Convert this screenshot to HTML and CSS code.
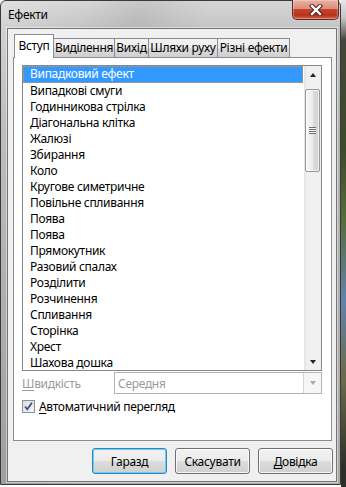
FILE: index.html
```html
<!DOCTYPE html>
<html lang="uk">
  <head>
    <meta charset="UTF-8" />
    <title>Ефекти</title>
    <link rel="stylesheet" href="styles.css">
  </head>
  <body>
    <div class="desk">
      <div class="window">
        <div class="titlebar">
          <span class="title">Ефекти</span>
          <button class="close-btn" title="Закрити">
            <svg width="14" height="12" viewBox="0 0 14 12">
              <path d="M3 2 L11 10 M11 2 L3 10" stroke="#4a2018" stroke-width="4.4" stroke-linecap="square" fill="none"/>
              <path d="M3 2 L11 10 M11 2 L3 10" stroke="#ffffff" stroke-width="2.4" stroke-linecap="square" fill="none"/>
            </svg>
          </button>
        </div>

        <div class="client">
          <div class="tabs">
            <div class="tab active w-intro">Вступ</div>
            <div class="tab w-select">Виділення</div>
            <div class="tab w-exit">Вихід</div>
            <div class="tab w-path">Шляхи руху</div>
            <div class="tab w-misc">Різні ефекти</div>
          </div>

          <div class="tab-page">
            <div class="listbox">
              <ul class="effects">
                <li class="selected">Випадковий ефект</li>
                <li>Випадкові смуги</li>
                <li>Годинникова стрілка</li>
                <li>Діагональна клітка</li>
                <li>Жалюзі</li>
                <li>Збирання</li>
                <li>Коло</li>
                <li>Кругове симетричне</li>
                <li>Повільне спливання</li>
                <li>Поява</li>
                <li>Поява</li>
                <li>Прямокутник</li>
                <li>Разовий спалах</li>
                <li>Розділити</li>
                <li>Розчинення</li>
                <li>Спливання</li>
                <li>Сторінка</li>
                <li>Хрест</li>
                <li>Шахова дошка</li>
              </ul>
              <div class="vscroll">
                <div class="sb-arrow"><span class="tri up"></span></div>
                <div class="sb-track">
                  <div class="sb-thumb"><span class="grip"></span></div>
                </div>
                <div class="sb-arrow"><span class="tri down"></span></div>
              </div>
            </div>

            <div class="speed-row">
              <span class="speed-label"><u>Ш</u>видкість</span>
              <div class="combo">
                <span class="combo-text">Середня</span>
                <span class="combo-btn"><span class="tri down gray"></span></span>
              </div>
            </div>

            <label class="check-row">
              <span class="checkbox">
                <svg width="11" height="11" viewBox="0 0 11 11">
                  <path d="M2 5.5 L4.3 8.3 L9 1.8" stroke="#3a4f86" stroke-width="1.8" fill="none"/>
                </svg>
              </span>
              <span><u>А</u>втоматичний перегляд</span>
            </label>
          </div>

          <div class="buttons">
            <button class="btn default">Гаразд</button>
            <button class="btn">Скасувати</button>
            <button class="btn"><u>Д</u>овідка</button>
          </div>
        </div>
      </div>
      <div class="desk-strip"></div>
    </div>
  </body>
</html>
```

FILE: styles.css
```css
body {
  margin: 0;
  font-family: 'Noto Sans', 'Open Sans', sans-serif;
  font-size: 12px;
  letter-spacing: -0.3px;
  color: #000;
  background-color: #fff;
}
.desk {
  display: flex;
  height: 487px;
  overflow: hidden;
}
.window {
  width: 341px;
  height: 485px;
  box-sizing: border-box;
  border: 1px solid #3a3a3a;
  border-radius: 6px 6px 0 0;
  padding: 0 3px 2px 6px;
  display: flex;
  flex-direction: column;
  position: relative;
  background:
    linear-gradient(105deg, rgba(255,255,255,0.25) 0, rgba(255,255,255,0) 18%, rgba(0,0,0,0.07) 30%, rgba(255,255,255,0) 45%),
    linear-gradient(to bottom, #d6d6d6 0, #c4c4c4 28px, #b3b3b3 120px, #a9a9a9 100%);
}
.desk-strip {
  flex: 1;
  background: linear-gradient(to bottom, #e8e8e8 0, #c4c4c4 18px, #46453a 40px, #3d4b2a 150px, #586c3c 220px, #6283ad 300px, #6b6a48 380px, #2d2d2a 470px);
}

/* заголовок */
.titlebar {
  height: 27px;
  display: flex;
  align-items: center;
  padding-left: 1px;
}
.title {
  font-size: 12px;
  color: #000;
  margin-top: -1px;
}
.close-btn {
  position: absolute;
  top: -1px;
  right: 1px;
  width: 47px;
  height: 20px;
  padding: 0;
  border: 1px solid #5e2a20;
  border-top: none;
  border-radius: 0 0 5px 5px;
  background: linear-gradient(to bottom, #eab0a2 0, #dc8f7c 45%, #c8412c 50%, #b8321e 80%, #d2694c 100%);
  box-shadow: inset 0 0 0 1px rgba(255,255,255,0.3);
  display: flex;
  align-items: center;
  justify-content: center;
}

/* клієнтська частина */
.client {
  flex: 1;
  display: flex;
  flex-direction: column;
  background-color: #f0f0f0;
  border: 1px solid #747474;
  box-shadow: 0 0 0 1px rgba(255,255,255,0.45);
}
.tabs {
  display: flex;
  align-items: flex-end;
  height: 22px;
  margin: 6px 0 0 6px;
  position: relative;
  z-index: 1;
}
.tab {
  height: 18px;
  line-height: 17px;
  box-sizing: content-box;
  text-align: center;
  border: 1px solid #898c95;
  border-bottom: none;
  margin-left: -1px;
  background: linear-gradient(to bottom, #f2f2f2 0, #ebebeb 50%, #dddddd 50%, #cfcfcf 100%);
  white-space: nowrap;
}
.tab.active {
  height: 23px;
  line-height: 22px;
  margin-left: 0;
  margin-bottom: -1px;
  background: #fff;
  position: relative;
  z-index: 2;
}
.w-intro { width: 38px; }
.w-select { width: 60px; }
.w-exit { width: 33px; }
.w-path { width: 68px; }
.w-misc { width: 71px; }

/* сторінка вкладки */
.tab-page {
  height: 384px;
  box-sizing: border-box;
  margin: 0 4px 0 5px;
  border: 1px solid #898c95;
  background-color: #fff;
  padding: 7px 0 0 8px;
}
.listbox {
  width: 300px;
  height: 306px;
  box-sizing: border-box;
  border: 1px solid #828790;
  display: flex;
  overflow: hidden;
}
.effects {
  flex: 1;
  list-style: none;
  margin: 0;
  padding: 0;
  overflow: hidden;
}
.effects li {
  height: 16px;
  line-height: 15px;
  padding-left: 7px;
  white-space: nowrap;
}
.effects li.selected {
  background-color: #3399ff;
  color: #fff;
  border: 1px dotted #e8923a;
  height: 15px;
  line-height: 14px;
  padding-left: 6px;
  margin-right: 1px;
}

/* смуга прокрутки */
.vscroll {
  width: 17px;
  display: flex;
  flex-direction: column;
  background: linear-gradient(to right, #e3e3e3 0, #f0f0f0 3px, #f0f0f0 100%);
}
.sb-arrow {
  height: 17px;
  display: flex;
  align-items: center;
  justify-content: center;
}
.sb-track {
  flex: 1;
  padding: 6px 1px 0 1px;
}
.sb-thumb {
  height: 83px;
  box-sizing: border-box;
  border: 1px solid #979797;
  border-radius: 2px;
  background: linear-gradient(to right, #f6f6f6 0, #ececec 50%, #dcdcdc 51%, #d2d2d2 100%);
  box-shadow: inset 0 0 0 1px rgba(255,255,255,0.7);
  display: flex;
  align-items: center;
  justify-content: center;
}
.grip {
  width: 7px;
  height: 7px;
  background: repeating-linear-gradient(to bottom, #6e6e6e 0, #6e6e6e 1px, #f4f4f4 1px, #f4f4f4 2px);
}
.tri {
  width: 0;
  height: 0;
  border-left: 3.5px solid transparent;
  border-right: 3.5px solid transparent;
}
.tri.up {
  border-bottom: 4px solid #222;
}
.tri.down {
  border-top: 4px solid #222;
}
.tri.down.gray {
  border-top-color: #a8a8a8;
}

/* швидкість */
.speed-row {
  display: flex;
  align-items: center;
  margin-top: 1px;
  height: 22px;
}
.speed-label {
  width: 92px;
  color: #9a9a9a;
}
.combo {
  width: 208px;
  height: 22px;
  box-sizing: border-box;
  border: 1px solid #b4b4b4;
  display: flex;
  align-items: center;
  color: #9a9a9a;
  background-color: #fff;
}
.combo-text {
  flex: 1;
  padding-left: 3px;
}
.combo-btn {
  width: 17px;
  height: 20px;
  border-left: 1px solid #d4d4d4;
  background-color: #f6f6f6;
  display: flex;
  align-items: center;
  justify-content: center;
}

/* прапорець */
.check-row {
  display: flex;
  align-items: center;
  gap: 4px;
  margin-top: 4px;
}
.checkbox {
  width: 13px;
  height: 13px;
  box-sizing: border-box;
  border: 1px solid #8e8f8f;
  background: linear-gradient(135deg, #dcdcdc 0, #f6f6f6 100%);
  display: flex;
  align-items: center;
  justify-content: center;
}

/* кнопки */
.buttons {
  display: flex;
  justify-content: flex-end;
  gap: 8px;
  margin: 7px 3px 0 0;
}
.btn {
  width: 75px;
  height: 26px;
  padding: 0;
  font-family: 'Noto Sans', 'Open Sans', sans-serif;
  font-size: 12px;
  letter-spacing: -0.3px;
  color: #000;
  border: 1px solid #707070;
  border-radius: 3px;
  background: linear-gradient(to bottom, #f2f2f2 0, #ebebeb 50%, #dddddd 50%, #cfcfcf 100%);
  box-shadow: inset 0 0 0 1px rgba(255,255,255,0.8);
}
.btn.default {
  border-color: #3c7fb1;
  box-shadow: inset 0 0 0 1px #5fd3ff;
}
u {
  text-decoration-thickness: 1px;
  text-underline-offset: 2px;
}
```
